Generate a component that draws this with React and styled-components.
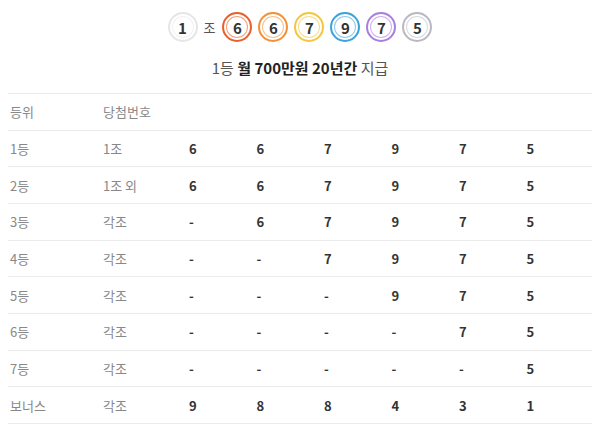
import React from "react";
import styled, { createGlobalStyle } from "styled-components";

const Global = createGlobalStyle`
  html, body { margin: 0; padding: 0; background: #fff; }
  body { font-family: "Noto Sans CJK KR", "Noto Sans", sans-serif; color: #333; }
`;

const Page = styled.div`
  padding: 12px 8px 0;
`;

const BallRow = styled.div`
  display: flex;
  justify-content: center;
  align-items: center;
  gap: 6px;
  height: 30px;
`;

const Ball = styled.span`
  width: 30px;
  height: 30px;
  box-sizing: border-box;
  border-radius: 50%;
  border: 2px solid ${(p) => p.$c};
  box-shadow: inset 0 0 0 2px #fff, inset 0 0 0 3px ${(p) => p.$inner};
  display: flex;
  align-items: center;
  justify-content: center;
  font-size: 15px;
  font-weight: 700;
  color: #333;
  line-height: 1;
`;

const Jo = styled.span`
  font-size: 13px;
  color: #555;
  margin: 0 1px 0 0;
`;

const Title = styled.div`
  text-align: center;
  font-size: 15px;
  color: #555;
  margin-top: 15px;
  line-height: 22px;
  b { color: #222; font-weight: 700; }
`;

const Table = styled.div`
  margin-top: 14px;
  border-top: 1px solid #ececec;
`;

const Row = styled.div`
  display: grid;
  grid-template-columns: 93px 86px repeat(6, 1fr);
  height: 36.67px;
  box-sizing: border-box;
  border-bottom: 1px solid #ececec;
  align-items: center;
`;

const Cell = styled.div`
  padding-left: 2px;
  font-size: 13px;
  color: ${(p) => (p.$num ? "#333" : "#888")};
  font-weight: ${(p) => (p.$num ? 700 : 400)};
`;

const balls = [
  { n: 6, c: "#e8602e", i: "#f1a27f" },
  { n: 6, c: "#f2913a", i: "#f7c18d" },
  { n: 7, c: "#f5c542", i: "#f8dc8d" },
  { n: 9, c: "#3ca2de", i: "#8fcaee" },
  { n: 7, c: "#a97fde", i: "#cdb3ee" },
  { n: 5, c: "#b9b9c3", i: "#d9d9e0" },
];

const rows = [
  ["1등", "1조", ["6", "6", "7", "9", "7", "5"]],
  ["2등", "1조 외", ["6", "6", "7", "9", "7", "5"]],
  ["3등", "각조", ["-", "6", "7", "9", "7", "5"]],
  ["4등", "각조", ["-", "-", "7", "9", "7", "5"]],
  ["5등", "각조", ["-", "-", "-", "9", "7", "5"]],
  ["6등", "각조", ["-", "-", "-", "-", "7", "5"]],
  ["7등", "각조", ["-", "-", "-", "-", "-", "5"]],
  ["보너스", "각조", ["9", "8", "8", "4", "3", "1"]],
];

export default function App() {
  return (
    <Page>
      <Global />
      <BallRow>
        <Ball $c="#e6e6e6" $inner="#f2f2f2">1</Ball>
        <Jo>조</Jo>
        {balls.map((b, k) => (
          <Ball key={k} $c={b.c} $inner={b.i}>
            {b.n}
          </Ball>
        ))}
      </BallRow>
      <Title>
        1등 <b>월 700만원 20년간</b> 지급
      </Title>
      <Table>
        <Row>
          <Cell>등위</Cell>
          <Cell>당첨번호</Cell>
        </Row>
        {rows.map(([r, g, nums]) => (
          <Row key={r}>
            <Cell>{r}</Cell>
            <Cell>{g}</Cell>
            {nums.map((d, k) => (
              <Cell key={k} $num>
                {d}
              </Cell>
            ))}
          </Row>
        ))}
      </Table>
    </Page>
  );
}
